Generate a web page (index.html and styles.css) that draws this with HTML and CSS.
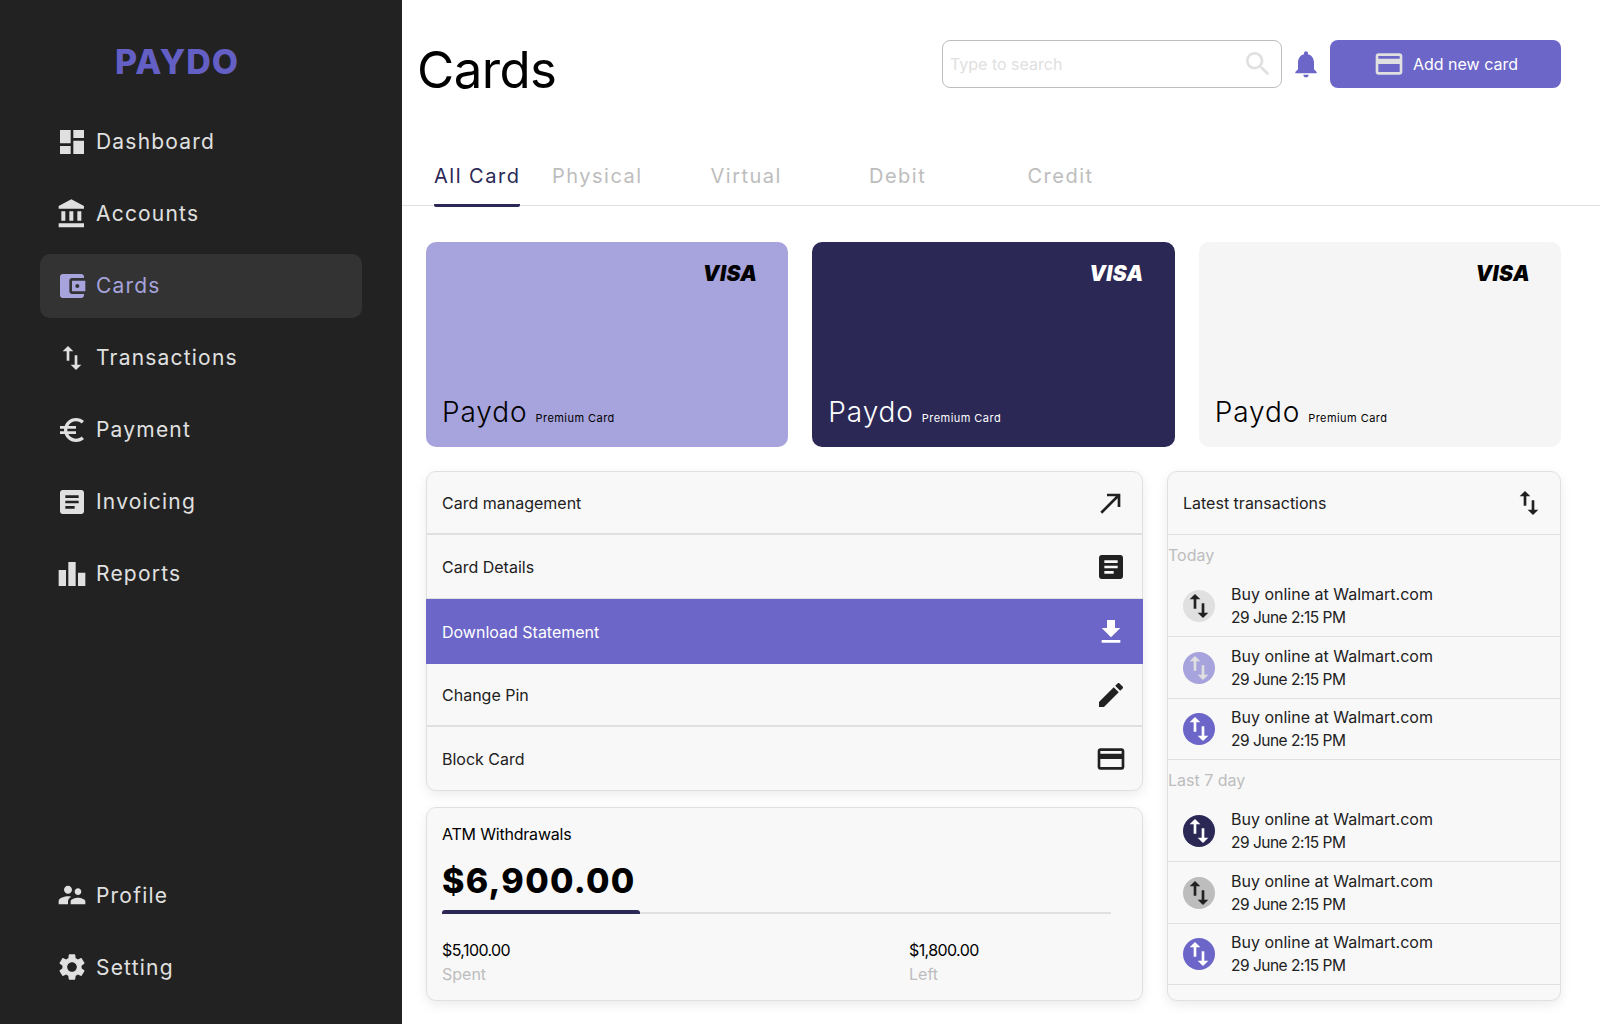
FILE: index.html
```html
<!DOCTYPE html>
<html lang="en">
<head>
<meta charset="utf-8">
<title>Paydo - Cards</title>
<link rel="stylesheet" href="styles.css">
</head>
<body>
<svg class="sprite" aria-hidden="true">
  <symbol id="i-dashboard" viewBox="0 0 24 24"><path d="M3 13h8V3H3v10zm0 8h8v-6H3v6zm10 0h8V11h-8v10zm0-18v6h8V3h-8z"/></symbol>
  <symbol id="i-bank" viewBox="0 0 24 24"><path d="M4 10v7h3v-7H4zm6 0v7h3v-7h-3zM2 22h19v-3H2v3zm14-12v7h3v-7h-3zm-4.5-9L2 6v2h19V6l-9.5-5z"/></symbol>
  <symbol id="i-wallet" viewBox="0 0 24 24"><path d="M21 18v1c0 1.1-.9 2-2 2H5c-1.11 0-2-.9-2-2V5c0-1.1.89-2 2-2h14c1.1 0 2 .9 2 2v1h-9c-1.11 0-2 .9-2 2v8c0 1.1.89 2 2 2h9zm-9-2h10V8H12v8zm4-2.5c-.83 0-1.5-.67-1.5-1.5s.67-1.5 1.5-1.5 1.5.67 1.5 1.5-.67 1.5-1.5 1.5z"/></symbol>
  <symbol id="i-swap" viewBox="0 0 24 24"><path d="M16 17.01V10h-2v7.01h-3L15 21l4-3.99h-3zM9 3L5 6.99h3V14h2V6.99h3L9 3z"/></symbol>
  <symbol id="i-euro" viewBox="0 0 24 24"><path d="M15 18.5c-2.51 0-4.68-1.42-5.76-3.5H15v-2H8.58c-.05-.33-.08-.66-.08-1s.03-.67.08-1H15V9H9.24C10.32 6.92 12.5 5.5 15 5.5c1.61 0 3.09.59 4.23 1.57L21 5.3C19.41 3.87 17.3 3 15 3c-3.92 0-7.24 2.51-8.48 6H3v2h3.06c-.04.33-.06.66-.06 1s.02.67.06 1H3v2h3.52c1.24 3.49 4.56 6 8.48 6 2.31 0 4.41-.87 6-2.3l-1.78-1.77c-1.13.98-2.6 1.57-4.22 1.57z"/></symbol>
  <symbol id="i-article" viewBox="0 0 24 24"><path d="M19 3H5c-1.1 0-2 .9-2 2v14c0 1.1.9 2 2 2h14c1.1 0 2-.9 2-2V5c0-1.1-.9-2-2-2zm-5 14H7v-2h7v2zm3-4H7v-2h10v2zm0-4H7V7h10v2z"/></symbol>
  <symbol id="i-chart" viewBox="0 0 24 24"><path d="M7.5 21H2V9h5.5v12zm7.25-18h-5.5v18h5.5V3zM22 11h-5.5v10H22V11z"/></symbol>
  <symbol id="i-people" viewBox="0 0 24 24"><path d="M16.5 12c1.38 0 2.49-1.12 2.49-2.5S17.88 7 16.5 7C15.12 7 14 8.12 14 9.5s1.12 2.5 2.5 2.5zM9 11c1.66 0 2.99-1.34 2.99-3S10.66 5 9 5C7.34 5 6 6.34 6 8s1.34 3 3 3zm7.5 3c-1.83 0-5.5.92-5.5 2.75V19h11v-2.25c0-1.83-3.67-2.75-5.5-2.75zM9 13c-2.33 0-7 1.17-7 3.5V19h7v-2.25c0-.85.33-2.34 2.37-3.47C10.5 13.1 9.66 13 9 13z"/></symbol>
  <symbol id="i-gear" viewBox="0 0 24 24"><path d="M19.14 12.94c.04-.3.06-.61.06-.94 0-.32-.02-.64-.07-.94l2.03-1.58c.18-.14.23-.41.12-.61l-1.92-3.32c-.12-.22-.37-.29-.59-.22l-2.39.96c-.5-.38-1.03-.7-1.62-.94l-.36-2.54c-.04-.24-.24-.41-.48-.41h-3.84c-.24 0-.43.17-.47.41l-.36 2.54c-.59.24-1.13.57-1.62.94l-2.39-.96c-.22-.08-.47 0-.59.22L2.74 8.87c-.12.21-.08.47.12.61l2.03 1.58c-.05.3-.09.63-.09.94s.02.64.07.94l-2.03 1.58c-.18.14-.23.41-.12.61l1.92 3.32c.12.22.37.29.59.22l2.39-.96c.5.38 1.03.7 1.62.94l.36 2.54c.05.24.24.41.48.41h3.84c.24 0 .44-.17.47-.41l.36-2.54c.59-.24 1.13-.56 1.62-.94l2.39.96c.22.08.47 0 .59-.22l1.92-3.32c.12-.22.07-.47-.12-.61l-2.01-1.58zM12 15.6c-1.98 0-3.6-1.62-3.6-3.6s1.62-3.6 3.6-3.6 3.6 1.62 3.6 3.6-1.62 3.6-3.6 3.6z"/></symbol>
  <symbol id="i-search" viewBox="0 0 24 24"><path d="M15.5 14h-.79l-.28-.27C15.41 12.59 16 11.11 16 9.5 16 5.91 13.09 3 9.5 3S3 5.91 3 9.5 5.91 16 9.5 16c1.61 0 3.09-.59 4.23-1.57l.27.28v.79l5 4.99L20.49 19l-4.99-5zm-6 0C7.01 14 5 11.99 5 9.5S7.01 5 9.5 5 14 7.01 14 9.5 11.99 14 9.5 14z"/></symbol>
  <symbol id="i-bell" viewBox="0 0 24 24"><path d="M12 22c1.1 0 2-.9 2-2h-4c0 1.1.9 2 2 2zm6-6v-5c0-3.07-1.63-5.64-4.5-6.32V4c0-.83-.67-1.5-1.5-1.5s-1.5.67-1.5 1.5v.68C7.64 5.36 6 7.92 6 11v5l-2 2v1h16v-1l-2-2z"/></symbol>
  <symbol id="i-card" viewBox="0 0 24 24"><path d="M20 4H4c-1.11 0-1.99.89-1.99 2L2 18c0 1.11.89 2 2 2h16c1.11 0 2-.89 2-2V6c0-1.11-.89-2-2-2zm0 14H4v-6h16v6zm0-10H4V6h16v2z"/></symbol>
  <symbol id="i-northeast" viewBox="0 0 24 24"><path d="M9 5v2h6.59L4 18.59 5.41 20 17 8.41V15h2V5z"/></symbol>
  <symbol id="i-download" viewBox="0 0 24 24"><path d="M19 9h-4V3H9v6H5l7 7 7-7zM5 18v2h14v-2H5z"/></symbol>
  <symbol id="i-edit" viewBox="0 0 24 24"><path d="M3 17.25V21h3.75L17.81 9.94l-3.75-3.75L3 17.25zM20.71 7.04c.39-.39.39-1.02 0-1.41l-2.34-2.34c-.39-.39-1.02-.39-1.41 0l-1.83 1.83 3.75 3.75 1.83-1.83z"/></symbol>
</svg>

<div class="app">
  <aside class="sidebar">
    <div class="logo">PAYDO</div>
    <nav class="nav">
      <a class="nav-item"><svg class="icon"><use href="#i-dashboard"/></svg><span>Dashboard</span></a>
      <a class="nav-item"><svg class="icon"><use href="#i-bank"/></svg><span>Accounts</span></a>
      <a class="nav-item nav-item-active"><svg class="icon"><use href="#i-wallet"/></svg><span>Cards</span></a>
      <a class="nav-item"><svg class="icon"><use href="#i-swap"/></svg><span>Transactions</span></a>
      <a class="nav-item"><svg class="icon"><use href="#i-euro"/></svg><span>Payment</span></a>
      <a class="nav-item"><svg class="icon"><use href="#i-article"/></svg><span>Invoicing</span></a>
      <a class="nav-item"><svg class="icon"><use href="#i-chart"/></svg><span>Reports</span></a>
    </nav>
    <nav class="nav nav-bottom">
      <a class="nav-item"><svg class="icon"><use href="#i-people"/></svg><span>Profile</span></a>
      <a class="nav-item"><svg class="icon"><use href="#i-gear"/></svg><span>Setting</span></a>
    </nav>
  </aside>

  <main class="main">
    <header class="topbar">
      <h1 class="title">Cards</h1>
      <div class="actions">
        <div class="search">
          <span class="search-text">Type to search</span>
          <svg class="icon icon-search"><use href="#i-search"/></svg>
        </div>
        <svg class="icon icon-bell"><use href="#i-bell"/></svg>
        <button class="add-btn"><svg class="icon"><use href="#i-card"/></svg><span>Add new card</span></button>
      </div>
    </header>

    <div class="tabs">
      <div class="tab tab-first tab-active"><span>All Card</span></div>
      <div class="tab"><span>Physical</span></div>
      <div class="tab"><span>Virtual</span></div>
      <div class="tab"><span>Debit</span></div>
      <div class="tab"><span>Credit</span></div>
    </div>

    <div class="content">
      <section class="card-grid">
        <article class="pay-card pay-card-lilac">
          <div class="visa">VISA</div>
          <div class="card-foot"><span class="card-name">Paydo</span><span class="card-kind">Premium Card</span></div>
        </article>
        <article class="pay-card pay-card-navy">
          <div class="visa">VISA</div>
          <div class="card-foot"><span class="card-name">Paydo</span><span class="card-kind">Premium Card</span></div>
        </article>
        <article class="pay-card pay-card-light">
          <div class="visa">VISA</div>
          <div class="card-foot"><span class="card-name">Paydo</span><span class="card-kind">Premium Card</span></div>
        </article>
      </section>

      <section class="lower">
        <div class="left-col">
          <div class="panel menu">
            <div class="menu-row"><span>Card management</span><svg class="icon"><use href="#i-northeast"/></svg></div>
            <div class="menu-row menu-row-thin"><span>Card Details</span><svg class="icon"><use href="#i-article"/></svg></div>
            <div class="menu-row menu-row-active"><span>Download Statement</span><svg class="icon"><use href="#i-download"/></svg></div>
            <div class="menu-row"><span>Change Pin</span><svg class="icon"><use href="#i-edit"/></svg></div>
            <div class="menu-row"><span>Block Card</span><svg class="icon"><use href="#i-card"/></svg></div>
          </div>
          <div class="panel atm">
            <div class="atm-title">ATM Withdrawals</div>
            <div class="atm-amount">$6,900.00</div>
            <div class="bar"><div class="bar-fill" style="width:29.6%"></div></div>
            <div class="atm-stats">
              <div class="stat"><div class="stat-value">$5,100.00</div><div class="stat-label">Spent</div></div>
              <div class="stat stat-right"><div class="stat-value">$1,800.00</div><div class="stat-label">Left</div></div>
            </div>
          </div>
        </div>

        <div class="panel tx">
          <div class="tx-head"><span>Latest transactions</span><svg class="icon"><use href="#i-swap"/></svg></div>
          <div class="tx-section">Today</div>
          <div class="tx-row"><div class="tx-avatar av-grey"><svg class="icon"><use href="#i-swap"/></svg></div><div class="tx-text"><div>Buy online at Walmart.com</div><div class="tx-date">29 June 2:15 PM</div></div></div>
          <div class="tx-row"><div class="tx-avatar av-lilac"><svg class="icon"><use href="#i-swap"/></svg></div><div class="tx-text"><div>Buy online at Walmart.com</div><div class="tx-date">29 June 2:15 PM</div></div></div>
          <div class="tx-row tx-row-short"><div class="tx-avatar av-purple"><svg class="icon"><use href="#i-swap"/></svg></div><div class="tx-text"><div>Buy online at Walmart.com</div><div class="tx-date">29 June 2:15 PM</div></div></div>
          <div class="tx-section">Last 7 day</div>
          <div class="tx-row"><div class="tx-avatar av-navy"><svg class="icon"><use href="#i-swap"/></svg></div><div class="tx-text"><div>Buy online at Walmart.com</div><div class="tx-date">29 June 2:15 PM</div></div></div>
          <div class="tx-row"><div class="tx-avatar av-midgrey"><svg class="icon"><use href="#i-swap"/></svg></div><div class="tx-text"><div>Buy online at Walmart.com</div><div class="tx-date">29 June 2:15 PM</div></div></div>
          <div class="tx-row tx-row-short"><div class="tx-avatar av-purple"><svg class="icon"><use href="#i-swap"/></svg></div><div class="tx-text"><div>Buy online at Walmart.com</div><div class="tx-date">29 June 2:15 PM</div></div></div>
        </div>
      </section>
    </div>
  </main>
</div>
</body>
</html>
```

FILE: styles.css
```css
* { box-sizing: border-box; }
html, body { margin: 0; padding: 0; height: 100%; }
body {
  font-family: "Inter", "Liberation Sans", sans-serif;
  color: #212121;
  background: #fff;
  overflow: hidden;
}
.sprite { width: 0; height: 0; display: block; overflow: hidden; }
.icon { width: 32px; height: 32px; fill: currentColor; flex: none; display: block; }

.app { display: flex; height: 1024px; }

/* Sidebar */
.sidebar {
  width: 402px;
  flex: none;
  background: #222222;
  display: flex;
  flex-direction: column;
  padding: 0 40px 25px;
}
.logo {
  font-size: 34px;
  font-weight: 800;
  line-height: 48px;
  color: #635fc4;
  margin: 38px 0 24px 75px;
  letter-spacing: 1px;
}
.nav { display: flex; flex-direction: column; gap: 8px; }
.nav-bottom { margin-top: auto; }
.nav-item {
  height: 64px;
  display: flex;
  align-items: center;
  gap: 8px;
  padding: 0 16px;
  border-radius: 10px;
  color: #e0e0e0;
  font-size: 21px;
  letter-spacing: 1.2px;
}
.nav-item span { padding-bottom: 2px; }
.nav-bottom .nav-item span { padding-bottom: 0; }
.nav-item-active { background: #333333; color: #a7a3dc; }

/* Main */
.main { flex: 1; min-width: 0; display: flex; flex-direction: column; }
.topbar {
  height: 150px;
  padding: 40px 39px 0 15px;
  display: flex;
  justify-content: space-between;
  align-items: flex-start;
}
.title {
  margin: 0;
  font-size: 51px;
  font-weight: 400;
  line-height: 60px;
  color: #000;
  letter-spacing: -0.6px;
}
.actions { display: flex; align-items: center; }
.search {
  width: 340px;
  height: 48px;
  border: 1px solid #bdbdbd;
  border-radius: 8px;
  display: flex;
  align-items: center;
  justify-content: space-between;
  padding: 0 7px;
}
.search-text { font-size: 16px; color: #e0e0e0; }
.icon-search { color: #e0e0e0; }
.icon-bell { color: #6c66c8; margin: 0 8px; }
.add-btn {
  width: 231px;
  height: 48px;
  border: 0;
  border-radius: 8px;
  background: #6c66c8;
  color: #fff;
  font: inherit;
  font-size: 16px;
  display: flex;
  align-items: center;
  justify-content: center;
  gap: 8px;
}
.add-btn .icon { color: #e0e0e0; }

/* Tabs */
.tabs {
  height: 56px;
  padding-left: 32px;
  border-bottom: 1px solid #e0e0e0;
  display: flex;
}
.tab {
  width: 158.5px;
  font-size: 20px;
  letter-spacing: 1.5px;
  color: #bdbdbd;
  line-height: 30px;
}
.tab-first { width: 118px; }
.tab span { display: inline-block; height: 57px; padding-top: 11px; }
.tab-active { color: #2b2856; }
.tab-active span { border-bottom: 3px solid #2b2856; border-radius: 0 0 2px 2px; }

/* Content */
.content { padding: 36px 39px 0 24px; display: flex; flex-direction: column; gap: 24px; }
.card-grid { display: grid; grid-template-columns: repeat(3, 1fr); gap: 24px; }
.pay-card {
  height: 205px;
  border-radius: 10px;
  display: flex;
  flex-direction: column;
  justify-content: space-between;
  padding: 20px 31px 17px 16px;
  color: #000;
}
.pay-card-lilac { background: #a7a3dc; }
.pay-card-navy { background: #2b2856; color: #fff; }
.pay-card-light { background: #f5f5f5; }
.visa {
  align-self: flex-end;
  font-size: 21px;
  font-weight: 900;
  font-style: italic;
  line-height: 24px;
  letter-spacing: 0.4px;
}
.card-foot { display: flex; align-items: baseline; gap: 8px; }
.card-name { font-size: 28px; line-height: 36px; letter-spacing: 0.9px; font-weight: 300; }
.card-kind { font-size: 11px; letter-spacing: 0.45px; }

.lower { display: grid; grid-template-columns: 717px 1fr; gap: 24px; height: 530px; }
.left-col { display: flex; flex-direction: column; gap: 16px; }
.panel {
  background: #f8f8f8;
  border: 1px solid #e0e0e0;
  border-radius: 10px;
  box-shadow: 0 4px 12px rgba(0, 0, 0, 0.08);
  overflow: hidden;
}
.menu { height: 320px; display: flex; flex-direction: column; overflow: visible; }
.menu-row {
  height: 63px;
  flex: none;
  display: flex;
  align-items: center;
  justify-content: space-between;
  padding: 0 15px;
  font-size: 16px;
  border-bottom: 2px solid #e0e0e0;
}
.menu-row:last-child { border-bottom: 0; }
.menu-row-thin { height: 64px; border-bottom-width: 1px; }
.menu-row-active {
  height: 65px;
  background: #6c66c8;
  color: #fff;
  border-bottom: 0;
  margin: 0 -1px;
  padding: 0 16px;
}

.atm { flex: 1; padding: 14px 31px 0 15px; }
.atm-title { font-size: 16px; line-height: 24px; color: #000; letter-spacing: -0.2px; }
.atm-amount {
  font-size: 34px;
  font-weight: 800;
  line-height: 44px;
  letter-spacing: 1.3px;
  color: #000;
  margin-top: 13px;
}
.bar { height: 4px; margin-top: 7px; border-bottom: 2px solid #e0e0e0; }
.bar-fill { height: 4px; background: #2b2856; border-radius: 3px 3px 0 0; }
.atm-stats { display: flex; margin-top: 25px; }
.stat { width: 467px; }
.stat-right { width: auto; }
.stat-value { font-size: 16px; line-height: 23px; color: #000; letter-spacing: -0.6px; }
.stat-label { font-size: 16px; line-height: 24px; color: #bdbdbd; }

.tx-head {
  height: 63px;
  padding: 0 15px;
  border-bottom: 1px solid #e0e0e0;
  display: flex;
  align-items: center;
  justify-content: space-between;
  font-size: 16px;
}
.tx-section { height: 40px; display: flex; align-items: center; font-size: 16px; color: #bdbdbd; }
.tx-row {
  height: 62px;
  padding: 0 15px;
  display: flex;
  align-items: center;
  gap: 16px;
  border-bottom: 1px solid #e0e0e0;
}
.tx-row-short { height: 61px; }
.tx-avatar { width: 32px; height: 32px; border-radius: 50%; flex: none; }
.av-grey { background: #e0e0e0; color: #212121; }
.av-lilac { background: #a7a3dc; color: #e0e0e0; }
.av-purple { background: #6c66c8; color: #fff; }
.av-navy { background: #2b2856; color: #fff; }
.av-midgrey { background: #bdbdbd; color: #212121; }
.tx-text { font-size: 16px; line-height: 23px; }
.tx-date { font-size: 15.5px; letter-spacing: -0.5px; }
```
